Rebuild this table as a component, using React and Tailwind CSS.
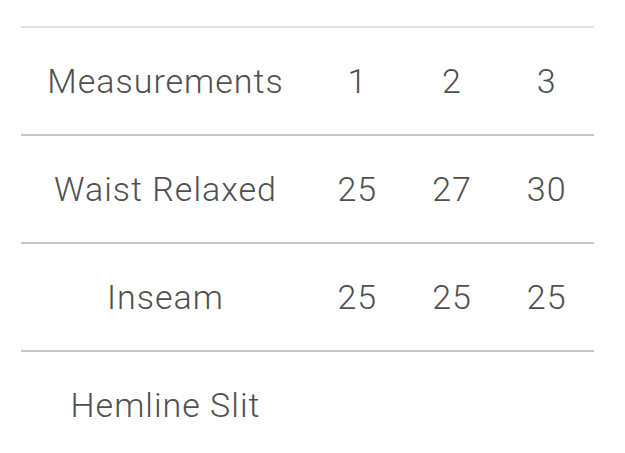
import React from "react";

const rows = [
  { label: "Measurements", values: ["1", "2", "3"] },
  { label: "Waist Relaxed", values: ["25", "27", "30"] },
  { label: "Inseam", values: ["25", "25", "25"] },
  { label: "Hemline Slit", values: ["", "", ""] },
];

const App = () => {
  return (
    <div className="w-[625px] h-[453px] bg-white pt-[26px] overflow-hidden font-['Roboto',sans-serif] font-light text-[#4f4f4f]">
      <div className="mx-[21px] w-[573px]">
        {rows.map((row, i) => (
          <div
            key={row.label}
            className={`grid grid-cols-[289px_1fr_1fr_1fr] h-[108px] items-center border-t-2 text-[34px] tracking-[1px] ${
              i === 0 ? "border-[#e2e2e2]" : "border-[#c6c6c6]"
            }`}
          >
            <div className="text-center">{row.label}</div>
            {row.values.map((v, j) => (
              <div key={j} className="text-center">
                {v}
              </div>
            ))}
          </div>
        ))}
      </div>
    </div>
  );
};

export default App;
